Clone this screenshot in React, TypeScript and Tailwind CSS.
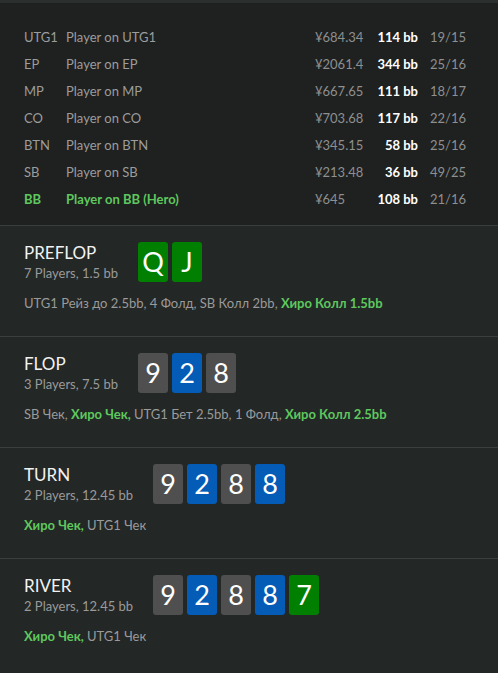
import React from 'react';

type Card = { rank: string; color: 'green' | 'blue' | 'gray' };

interface Player {
  pos: string;
  name: string;
  money: string;
  stack: string;
  stat: string;
  hero?: boolean;
}

const PLAYERS: Player[] = [
  { pos: 'UTG1', name: 'Player on UTG1', money: '¥684.34', stack: '114 bb', stat: '19/15' },
  { pos: 'EP', name: 'Player on EP', money: '¥2061.4', stack: '344 bb', stat: '25/16' },
  { pos: 'MP', name: 'Player on MP', money: '¥667.65', stack: '111 bb', stat: '18/17' },
  { pos: 'CO', name: 'Player on CO', money: '¥703.68', stack: '117 bb', stat: '22/16' },
  { pos: 'BTN', name: 'Player on BTN', money: '¥345.15', stack: '58 bb', stat: '25/16' },
  { pos: 'SB', name: 'Player on SB', money: '¥213.48', stack: '36 bb', stat: '49/25' },
  { pos: 'BB', name: 'Player on BB (Hero)', money: '¥645', stack: '108 bb', stat: '21/16', hero: true },
];

const CARD_BG: Record<Card['color'], string> = {
  green: 'bg-[#007f00]',
  blue: 'bg-[#045cb6]',
  gray: 'bg-[#4f4f4f]',
};

type Action = { text: string; hero?: boolean };

interface Street {
  name: string;
  info: string;
  cards: Card[];
  actions: Action[];
}

const board: Card[] = [
  { rank: '9', color: 'gray' },
  { rank: '2', color: 'blue' },
  { rank: '8', color: 'gray' },
  { rank: '8', color: 'blue' },
  { rank: '7', color: 'green' },
];

const STREETS: Street[] = [
  {
    name: 'PREFLOP',
    info: '7 Players, 1.5 bb',
    cards: [
      { rank: 'Q', color: 'green' },
      { rank: 'J', color: 'green' },
    ],
    actions: [
      { text: 'UTG1 Рейз до 2.5bb, 4 Фолд, SB Колл 2bb, ' },
      { text: 'Хиро Колл 1.5bb', hero: true },
    ],
  },
  {
    name: 'FLOP',
    info: '3 Players, 7.5 bb',
    cards: board.slice(0, 3),
    actions: [
      { text: 'SB Чек, ' },
      { text: 'Хиро Чек, ', hero: true },
      { text: 'UTG1 Бет 2.5bb, 1 Фолд, ' },
      { text: 'Хиро Колл 2.5bb', hero: true },
    ],
  },
  {
    name: 'TURN',
    info: '2 Players, 12.45 bb',
    cards: board.slice(0, 4),
    actions: [{ text: 'Хиро Чек, ', hero: true }, { text: 'UTG1 Чек' }],
  },
  {
    name: 'RIVER',
    info: '2 Players, 12.45 bb',
    cards: board,
    actions: [{ text: 'Хиро Чек, ', hero: true }, { text: 'UTG1 Чек' }],
  },
];

function PlayerRow({ p }: { p: Player }) {
  const nameCls = p.hero ? 'font-bold text-[#5ec75e]' : 'text-[#9c9c9c]';
  return (
    <div className="flex h-[27px] items-center text-[13px]">
      <span className={`w-[42px] ${nameCls}`}>{p.pos}</span>
      <span className={`flex-1 ${nameCls}`}>{p.name}</span>
      <span className="w-[53px] text-[#8f8f8f]">{p.money}</span>
      <span className="w-[50px] text-right font-bold text-white">{p.stack}</span>
      <span className="ml-3 w-[44px] text-[#8f8f8f]">{p.stat}</span>
    </div>
  );
}

function StreetBlock({ s }: { s: Street }) {
  return (
    <section className="border-t border-[#3a3e3d] bg-[#232726] px-6 pb-6 pt-4">
      <div className="flex items-center">
        <div className="flex flex-col">
          <span className="text-[17px] leading-[22px] text-[#f2f2f2]">{s.name}</span>
          <span className="text-[13px] leading-[18px] text-[#9a9a9a]">{s.info}</span>
        </div>
        <div className="ml-5 flex gap-1">
          {s.cards.map((c, i) => (
            <div
              key={i}
              className={`flex h-10 w-[30px] items-center justify-center rounded-[3px] text-[27px] text-white ${CARD_BG[c.color]}`}
            >
              {c.rank}
            </div>
          ))}
        </div>
      </div>
      <p className="mt-3 text-[13px] leading-[18px] text-[#9a9a9a]">
        {s.actions.map((a, i) =>
          a.hero ? (
            <span key={i} className="font-bold text-[#5ec75e]">
              {a.text}
            </span>
          ) : (
            <span key={i}>{a.text}</span>
          ),
        )}
      </p>
    </section>
  );
}

export default function App() {
  return (
    <div className="min-h-[673px] w-[498px] bg-[#232726] font-['Lato','Roboto',sans-serif]">
      <div className="h-[3px] bg-[#2b2f2e]" />
      <div className="bg-[#1e2120] px-6 pb-3 pt-[21px]">
        {PLAYERS.map((p) => (
          <PlayerRow key={p.pos} p={p} />
        ))}
      </div>
      {STREETS.map((s) => (
        <StreetBlock key={s.name} s={s} />
      ))}
    </div>
  );
}
